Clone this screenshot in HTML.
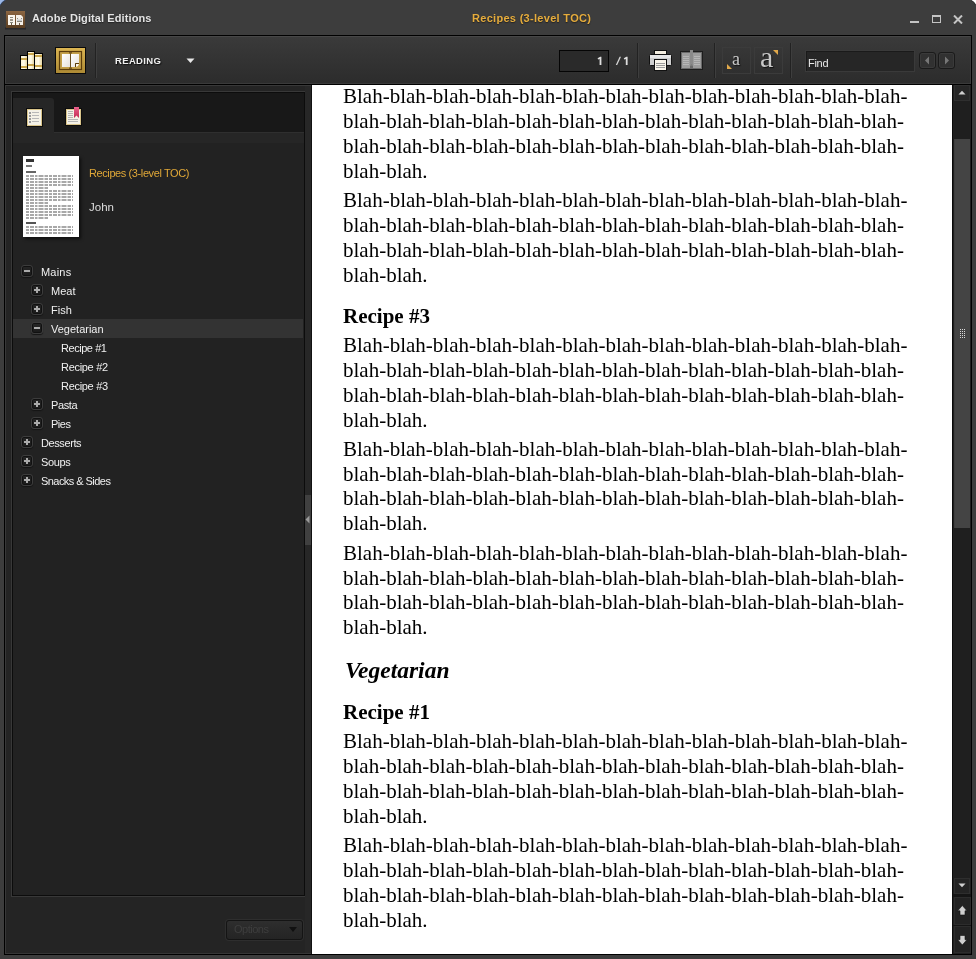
<!DOCTYPE html>
<html><head><meta charset="utf-8">
<style>
*{margin:0;padding:0;box-sizing:border-box}
html,body{width:976px;height:959px;overflow:hidden;background:#3c3c3c;font-family:"Liberation Sans",sans-serif}
.a{position:absolute}
#win{position:absolute;left:0;top:0;width:976px;height:959px;background:#3d3d3d;overflow:hidden;will-change:transform}
#cTL{left:-4px;top:-4px;width:10px;height:10px;background:#8ab0e8;transform:rotate(45deg)}
#cTR{right:-5px;top:-5px;width:10px;height:10px;background:#fff;transform:rotate(45deg)}
#appico{left:6px;top:11px;width:19px;height:17px;background:linear-gradient(#7a5634,#5a3c22);box-shadow:0 1px 1px #222}
.ttl{font-size:11px;font-weight:bold;white-space:nowrap;text-shadow:0 1px 1px #222}
#frame{left:4px;top:35px;width:968px;height:920px;background:#000}
#toolbar{left:5px;top:36px;width:966px;height:48px;background:linear-gradient(#3a3a3a,#2c2c2c);border-top:1px solid #474747;border-left:1px solid #3f3f3f;border-bottom:1px solid #3a3a3a;border-right:1px solid #3a3a3a}
#below{left:5px;top:85px;width:966px;height:869px;background:#242424;border-top:1px solid #383838;border-left:1px solid #383838;border-bottom:1px solid #363636}
#side{left:11px;top:91px;width:295px;height:806px;border:1px solid #383838;border-right-color:#2a2a2a}
#sidein{left:12px;top:92px;width:293px;height:804px;background:#222;border:1px solid #0c0c0c}
#tabbar{left:13px;top:93px;width:291px;height:39px;background:#181818}
#tab1{left:13px;top:98px;width:41px;height:35px;background:#262626;border-top-right-radius:3px}
#tabline{left:13px;top:132px;width:291px;height:11px;background:#262626;border-top:1px solid #2f2f2f}
#page{left:312px;top:85px;width:640px;height:869px;background:#fff;overflow:hidden;will-change:transform}
.p{position:absolute;left:31px;font-family:"Liberation Serif",serif;font-size:21.0px;line-height:24.9px;color:#000;white-space:nowrap;transform:scaleX(1.0000);transform-origin:0 0}
.h3{position:absolute;left:31px;font-family:"Liberation Serif",serif;font-size:21px;font-weight:bold;line-height:normal;color:#000;white-space:nowrap}
.h2{position:absolute;left:33px;font-family:"Liberation Serif",serif;font-size:23.5px;font-weight:bold;font-style:italic;line-height:normal;color:#000;white-space:nowrap}
#sb{left:953px;top:85px;width:18px;height:869px;background:#1f1f1f}
.sep{width:1px;height:35px;background:#222;box-shadow:1px 0 0 #3e3e3e}
.tt{font-size:11px;color:#f0f0f0;white-space:nowrap;line-height:14px}
.sel{left:13px;width:290px;height:19px;background:#333}
.tb{width:12px;height:12px;border-radius:3px;background:linear-gradient(#262626,#1a1a1a);border:1px solid #3c3c3c;box-shadow:inset 0 0 0 1px #111,0 1px 1px #151515}
.tb .h{position:absolute;left:2px;top:4px;width:6px;height:2px;background:#aaa}
.tb .v{position:absolute;left:4px;top:2px;width:2px;height:6px;background:#aaa}
</style></head><body>
<div id="win">
<svg class="a" style="left:0;top:0" width="8" height="8" viewBox="0 0 8 8"><path d="M0 0 H5.5 Q2 1.5 0 5.5 Z" fill="#9cb8e8"/><path d="M5.5 0 Q2 1.5 0 5.5" stroke="#23385a" stroke-width="0.8" fill="none"/></svg>
<svg class="a" style="left:968px;top:0" width="8" height="8" viewBox="0 0 8 8"><path d="M2.5 0 H8 V5.5 Q6.5 1.5 2.5 0 Z" fill="#fff"/><path d="M2.5 0 Q6.5 1.5 8 5.5" stroke="#1a1a1a" stroke-width="0.8" fill="none"/></svg>
<!-- title bar -->
<svg class="a" style="left:5px;top:10px" width="22" height="20" viewBox="0 0 22 20">
 <defs><linearGradient id="ai" x1="0" y1="0" x2="0" y2="1"><stop offset="0" stop-color="#8c6642"/><stop offset="1" stop-color="#5a3e22"/></linearGradient></defs>
 <rect x="0" y="17.5" width="21" height="2" fill="#1e1e22" opacity="0.7"/>
 <rect x="1" y="1" width="19" height="17" fill="url(#ai)"/>
 <rect x="3" y="5" width="7" height="10" fill="#fbf6ee"/>
 <path d="M11 5 H16 L18 7 V15 H11 Z" fill="#f4efe8"/>
 <rect x="5" y="7" width="3" height="1" fill="#8a8a80"/>
 <rect x="5" y="9" width="3" height="2" fill="#9a9488"/>
 <rect x="5" y="12" width="3" height="1" fill="#8a8a80"/>
 <rect x="6" y="13" width="1" height="2" fill="#6a5a48"/>
 <rect x="12" y="8" width="1" height="1" fill="#8a8a80"/><rect x="16" y="8" width="1" height="1" fill="#8a8a80"/>
 <rect x="12" y="9.5" width="5" height="1.5" fill="#c8ccd0"/>
 <rect x="12" y="11" width="5" height="1" fill="#8a8478"/>
 <rect x="14" y="13" width="1" height="2" fill="#6a5a48"/>
</svg>
<div class="a ttl" style="left:32px;top:12px;color:#e4e4e4;letter-spacing:0.1px">Adobe Digital Editions</div>
<div class="a ttl" style="left:472px;top:12px;color:#e6ac3c;letter-spacing:0.3px">Recipes (3-level TOC)</div>
<div class="a" style="left:910px;top:21px;width:9px;height:2px;background:#c4c4c4"></div>
<div class="a" style="left:932px;top:15px;width:9px;height:8px;border:1px solid #c4c4c4;border-top-width:2px"></div>
<svg class="a" style="left:953px;top:15px" width="10" height="9" viewBox="0 0 10 9"><path d="M1 0.5 L9 8.5 M9 0.5 L1 8.5" stroke="#c4c4c4" stroke-width="2"/></svg>

<div class="a" id="frame"></div>
<div class="a" id="toolbar"></div>
<div class="a" id="below"></div>

<!-- toolbar items -->
<svg class="a" style="left:19px;top:50px" width="25" height="21" viewBox="0 0 25 21">
 <defs>
  <linearGradient id="bk" x1="0" y1="0" x2="1" y2="0"><stop offset="0" stop-color="#f7efd2"/><stop offset="0.5" stop-color="#fffbe8"/><stop offset="1" stop-color="#e0cf98"/></linearGradient>
 </defs>
 <rect x="1.5" y="5.5" width="7" height="14" fill="url(#bk)" stroke="#000" stroke-width="1"/>
 <rect x="8.5" y="1.5" width="7" height="18" fill="url(#bk)" stroke="#000" stroke-width="1"/>
 <rect x="15.5" y="3.5" width="8" height="16" fill="url(#bk)" stroke="#000" stroke-width="1"/>
 <rect x="2" y="8" width="6" height="2" fill="#c9a54a"/><rect x="2" y="16" width="6" height="2" fill="#c9a54a"/>
 <rect x="9" y="3" width="6" height="2" fill="#c9a54a"/><rect x="9" y="14" width="6" height="2" fill="#c9a54a"/>
 <rect x="16" y="5" width="7" height="2" fill="#c9a54a"/><rect x="16" y="15" width="7" height="2" fill="#c9a54a"/>
</svg>
<svg class="a" style="left:55px;top:47px" width="31" height="27" viewBox="0 0 31 27">
 <defs>
  <linearGradient id="gb" x1="0" y1="0" x2="0" y2="1"><stop offset="0" stop-color="#dcb552"/><stop offset="1" stop-color="#ad8a34"/></linearGradient>
  <linearGradient id="pg" x1="0" y1="0" x2="1" y2="1"><stop offset="0" stop-color="#ffffff"/><stop offset="1" stop-color="#e6e2dc"/></linearGradient>
 </defs>
 <rect x="0.5" y="0.5" width="30" height="26" fill="url(#gb)" stroke="#0a0a0a"/>
 <rect x="4.5" y="4.5" width="22" height="18" fill="#c4a04a" stroke="#5a3c0c" stroke-width="1.2"/>
 <rect x="7" y="7" width="8" height="13" fill="url(#pg)"/>
 <rect x="16" y="7" width="8" height="13" fill="url(#pg)"/>
 <rect x="15" y="5" width="1" height="17" fill="#6a5020"/>
 <rect x="14" y="5" width="3" height="1.5" fill="#7a5a20"/><rect x="14" y="20.5" width="3" height="1.5" fill="#7a5a20"/>
 <rect x="20" y="16" width="4" height="4" fill="#c4a04a"/>
 <path d="M20.5 20 V16.5 H24" stroke="#5a3c0c" stroke-width="1" fill="none"/>
 <path d="M21 20 L21 17 L24 17 Q23.5 19.5 21 20 Z" fill="#fdf8ee"/>
</svg>
<div class="a sep" style="left:95px;top:43px"></div>
<div class="a" style="left:115px;top:55px;font-size:9.5px;font-weight:bold;color:#f0f0f0;letter-spacing:0.35px;text-shadow:1px 1px 1px #111;line-height:12px">READING</div>
<svg class="a" style="left:186px;top:58px" width="9" height="6" viewBox="0 0 9 6"><path d="M0.5 0.5 L8.5 0.5 L4.5 5 Z" fill="#e8e8e8"/></svg>

<div class="a" style="left:559px;top:50px;width:50px;height:22px;background:#2a2a2a;border:1px solid #050505"></div>
<svg class="a" style="left:590px;top:52px" width="42" height="18" viewBox="0 0 42 18">
 <path d="M7.6 6.2 L10.2 4.7 L11.4 4.7 L11.4 13.1 L9.6 13.1 L9.6 6.9 L8.1 7.6 Z" fill="#dedede"/>
 <path d="M29.6 4.7 L31 4.7 L27.2 13.1 L25.8 13.1 Z" fill="#d8d8d8"/>
 <path d="M33.8 6.2 L36.4 4.7 L37.6 4.7 L37.6 13.1 L35.8 13.1 L35.8 6.9 L34.3 7.6 Z" fill="#dedede"/>
</svg>

<div class="a sep" style="left:637px;top:43px"></div>

<svg class="a" style="left:649px;top:50px" width="23" height="21" viewBox="0 0 23 21">
 <rect x="5.5" y="0.5" width="12" height="6" fill="#f4eee0" stroke="#111"/>
 <rect x="0.5" y="4.5" width="22" height="11" rx="1" fill="#cfcfcf" stroke="#111"/>
 <rect x="1" y="5" width="21" height="3" fill="#e6e6e6"/>
 <rect x="5.5" y="9.5" width="12" height="11" fill="#f8f4ea" stroke="#111"/>
 <path d="M7 13.5 H16 M7 15.5 H16 M7 17.5 H16" stroke="#9a9a9a" stroke-width="1"/>
</svg>
<svg class="a" style="left:680px;top:50px" width="23" height="20" viewBox="0 0 23 20">
 <rect x="0.5" y="1.5" width="22" height="18" fill="#6a6a6a" stroke="#1c1c1c"/>
 <rect x="2" y="3" width="8" height="15" fill="#9c9c9c"/>
 <rect x="13" y="3" width="8" height="15" fill="#9c9c9c"/>
 <rect x="10" y="0" width="3" height="16" fill="#8a8a8a"/>
 <path d="M10 16 L11.5 14 L13 16 Z" fill="#7a7a7a"/>
 <path d="M3 6.5 H9 M3 8.5 H9 M3 10.5 H9 M3 12.5 H9 M3 14.5 H9 M14 6.5 H20 M14 8.5 H20 M14 10.5 H20 M14 12.5 H20 M14 14.5 H20" stroke="#bcbcbc" stroke-width="0.8"/>
</svg>
<div class="a sep" style="left:714px;top:43px"></div>

<div class="a" style="left:722px;top:47px;width:29px;height:27px;border:1px solid #3b3b3b;background:transparent"></div>
<div class="a" style="left:754px;top:47px;width:29px;height:27px;border:1px solid #3b3b3b;background:transparent"></div>
<div class="a" style="left:732px;top:49px;font-family:'Liberation Serif',serif;font-size:18px;color:#c8c8c8;line-height:20px;text-shadow:1px 1px 1px #111">a</div>
<div class="a" style="left:760px;top:42px;font-family:'Liberation Serif',serif;font-size:30px;color:#c8c8c8;line-height:30px;text-shadow:1px 1px 1px #111">a</div>
<svg class="a" style="left:727px;top:64px" width="6" height="6" viewBox="0 0 6 6"><path d="M0 0 L5 5 L0 5 Z" fill="#e0a84a"/></svg>
<svg class="a" style="left:773px;top:50px" width="6" height="6" viewBox="0 0 6 6"><path d="M0 0 L5 0 L5 5 Z" fill="#e0a84a"/></svg>
<div class="a sep" style="left:790px;top:43px"></div>

<div class="a" style="left:805px;top:50px;width:110px;height:22px;background:#262626;border:1px solid #3a3a3a;box-shadow:inset 1px 1px 0 #1a1a1a"></div>
<div class="a" style="left:808px;top:57px;font-size:11px;color:#e8e8e8;line-height:13px;letter-spacing:-0.3px">Find</div>
<div class="a" style="left:919px;top:52px;width:17px;height:17px;border-radius:3px;background:#313131;border:1px solid #1a1a1a;box-shadow:inset 0 0 0 1px #3a3a3a"></div>
<div class="a" style="left:938px;top:52px;width:17px;height:17px;border-radius:3px;background:#313131;border:1px solid #1a1a1a;box-shadow:inset 0 0 0 1px #3a3a3a"></div>
<svg class="a" style="left:924px;top:56px" width="6" height="9" viewBox="0 0 6 9"><path d="M5 0.5 L5 8.5 L1 4.5 Z" fill="#777"/></svg>
<svg class="a" style="left:944px;top:56px" width="6" height="9" viewBox="0 0 6 9"><path d="M1 0.5 L1 8.5 L5 4.5 Z" fill="#777"/></svg>

<div class="a" id="side"></div>
<div class="a" id="sidein"></div>
<div class="a" id="tabbar"></div>
<div class="a" id="tabline"></div>
<div class="a" id="tab1"></div>


<!-- tab icons -->
<svg class="a" style="left:26px;top:108px" width="17" height="19" viewBox="0 0 17 19">
 <rect x="0.5" y="0.5" width="16" height="18" fill="#f2ecd8" stroke="#0c0c0c"/>
 <rect x="1.5" y="1.5" width="14" height="16" fill="#f4f1e6" stroke="#d9c48a" stroke-width="1"/>
 <rect x="3" y="4" width="2" height="2" fill="#9a9a9a"/><rect x="3" y="7" width="2" height="2" fill="#9a9a9a"/>
 <rect x="3" y="10" width="2" height="2" fill="#9a9a9a"/><rect x="3" y="13" width="2" height="2" fill="#9a9a9a"/>
 <path d="M6 4.5 H13 M6 7.5 H13 M6 10.5 H13 M6 13.5 H13" stroke="#b8b8b8" stroke-width="1"/>
</svg>
<svg class="a" style="left:65px;top:107px" width="17" height="19" viewBox="0 0 17 19">
 <rect x="0.5" y="1.5" width="16" height="17" fill="#f2ecd8" stroke="#0c0c0c"/>
 <rect x="1.5" y="2.5" width="14" height="15" fill="#f4f1e6" stroke="#d9c48a" stroke-width="1"/>
 <path d="M3 4.5 H8 M3 6.5 H8 M3 8.5 H8 M3 10.5 H8 M3 12.5 H13 M3 14.5 H13" stroke="#b4b4b4" stroke-width="1"/>
 <defs><linearGradient id="rb" x1="0" y1="0" x2="0" y2="1"><stop offset="0" stop-color="#e8608a"/><stop offset="1" stop-color="#c42a55"/></linearGradient></defs><path d="M9 0 H14 V11 L11.5 8.5 L9 11 Z" fill="url(#rb)"/>
</svg>
<!-- thumbnail -->
<div class="a" style="left:23px;top:156px;width:56px;height:81px;background:#fff;box-shadow:2px 2px 3px rgba(0,0,0,0.6)">
 <svg class="a" style="left:0;top:0" width="56" height="81" viewBox="0 0 56 81">
  <rect x="3" y="3" width="8" height="3" fill="#333"/>
  <rect x="3" y="9" width="6" height="2" fill="#777"/>
  <rect x="3" y="15" width="10" height="2" fill="#666"/>
  <path d="M3 20 h47 M3 23 h47 M3 26 h47 M3 29 h47 M3 32 h22 M3 35 h47 M3 38 h47 M3 41 h47 M3 44 h47 M3 47 h22 M3 50 h47 M3 53 h47 M3 56 h47 M3 59 h47 M3 62 h22 M3 71 h47 M3 74 h47 M3 77 h47" stroke="#8c8c8c" stroke-width="1.6" stroke-dasharray="3 1 4 1 2.5 1 5 1 3.5 1" fill="none"/>
  <rect x="3" y="66" width="10" height="2" fill="#555"/>
 </svg>
</div>
<div class="a" style="left:89px;top:166px;font-size:11px;color:#e0a838;line-height:14px;letter-spacing:-0.4px;white-space:nowrap">Recipes (3-level TOC)</div>
<div class="a" style="left:89px;top:200px;font-size:11.5px;color:#dedede;line-height:14px">John</div>

<!-- options button -->
<div class="a" style="left:226px;top:920px;width:77px;height:20px;border-radius:3px;background:linear-gradient(#2e2e2e,#242424);border:1px solid #141414;box-shadow:0 0 0 1px #2e2e2e"></div>
<div class="a" style="left:234px;top:922px;font-size:11px;color:#3e3e3e;line-height:14px;letter-spacing:-0.5px">Options</div>
<svg class="a" style="left:289px;top:927px" width="8" height="5" viewBox="0 0 8 5"><path d="M0 0 H8 L4 5 Z" fill="#111"/></svg>

<!-- splitter -->
<div class="a" style="left:305px;top:86px;width:6px;height:867px;background:#272727"></div>
<div class="a" style="left:311px;top:85px;width:1px;height:869px;background:#111"></div>
<div class="a" style="left:305px;top:495px;width:6px;height:50px;background:#404040"></div>
<svg class="a" style="left:305px;top:515px" width="5" height="9" viewBox="0 0 5 9"><path d="M4.5 0.5 V8.5 L0.5 4.5 Z" fill="#9a9a9a"/></svg>

<!-- TOC -->
<div class="a tb" style="left:21px;top:265px"><i class="h"></i></div>
<div class="a tt" style="left:41px;top:265px;letter-spacing:0.2px">Mains</div>
<div class="a tb" style="left:31px;top:284px"><i class="h"></i><i class="v"></i></div>
<div class="a tt" style="left:51px;top:284px;letter-spacing:0px">Meat</div>
<div class="a tb" style="left:31px;top:303px"><i class="h"></i><i class="v"></i></div>
<div class="a tt" style="left:51px;top:303px;letter-spacing:0px">Fish</div>
<div class="a sel" style="top:319px"></div>
<div class="a tb" style="left:31px;top:322px"><i class="h"></i></div>
<div class="a tt" style="left:51px;top:322px;letter-spacing:0px">Vegetarian</div>
<div class="a tt" style="left:61px;top:341px;letter-spacing:-0.45px">Recipe #1</div>
<div class="a tt" style="left:61px;top:360px;letter-spacing:-0.3px">Recipe #2</div>
<div class="a tt" style="left:61px;top:379px;letter-spacing:-0.3px">Recipe #3</div>
<div class="a tb" style="left:31px;top:398px"><i class="h"></i><i class="v"></i></div>
<div class="a tt" style="left:51px;top:398px;letter-spacing:-0.4px">Pasta</div>
<div class="a tb" style="left:31px;top:417px"><i class="h"></i><i class="v"></i></div>
<div class="a tt" style="left:51px;top:417px;letter-spacing:-0.5px">Pies</div>
<div class="a tb" style="left:21px;top:436px"><i class="h"></i><i class="v"></i></div>
<div class="a tt" style="left:41px;top:436px;letter-spacing:-0.4px">Desserts</div>
<div class="a tb" style="left:21px;top:455px"><i class="h"></i><i class="v"></i></div>
<div class="a tt" style="left:41px;top:455px;letter-spacing:-0.35px">Soups</div>
<div class="a tb" style="left:21px;top:474px"><i class="h"></i><i class="v"></i></div>
<div class="a tt" style="left:41px;top:474px;letter-spacing:-0.55px">Snacks &amp; Sides</div>

<div class="a" id="page">
<div class="p" style="top:-0.74px">Blah-blah-blah-blah-blah-blah-blah-blah-blah-blah-blah-blah-blah-<br>blah-blah-blah-blah-blah-blah-blah-blah-blah-blah-blah-blah-blah-<br>blah-blah-blah-blah-blah-blah-blah-blah-blah-blah-blah-blah-blah-<br>blah-blah.</div>
<div class="p" style="top:102.86px">Blah-blah-blah-blah-blah-blah-blah-blah-blah-blah-blah-blah-blah-<br>blah-blah-blah-blah-blah-blah-blah-blah-blah-blah-blah-blah-blah-<br>blah-blah-blah-blah-blah-blah-blah-blah-blah-blah-blah-blah-blah-<br>blah-blah.</div>
<div class="p" style="top:247.96px">Blah-blah-blah-blah-blah-blah-blah-blah-blah-blah-blah-blah-blah-<br>blah-blah-blah-blah-blah-blah-blah-blah-blah-blah-blah-blah-blah-<br>blah-blah-blah-blah-blah-blah-blah-blah-blah-blah-blah-blah-blah-<br>blah-blah.</div>
<div class="p" style="top:351.66px">Blah-blah-blah-blah-blah-blah-blah-blah-blah-blah-blah-blah-blah-<br>blah-blah-blah-blah-blah-blah-blah-blah-blah-blah-blah-blah-blah-<br>blah-blah-blah-blah-blah-blah-blah-blah-blah-blah-blah-blah-blah-<br>blah-blah.</div>
<div class="p" style="top:455.66px">Blah-blah-blah-blah-blah-blah-blah-blah-blah-blah-blah-blah-blah-<br>blah-blah-blah-blah-blah-blah-blah-blah-blah-blah-blah-blah-blah-<br>blah-blah-blah-blah-blah-blah-blah-blah-blah-blah-blah-blah-blah-<br>blah-blah.</div>
<div class="p" style="top:643.96px">Blah-blah-blah-blah-blah-blah-blah-blah-blah-blah-blah-blah-blah-<br>blah-blah-blah-blah-blah-blah-blah-blah-blah-blah-blah-blah-blah-<br>blah-blah-blah-blah-blah-blah-blah-blah-blah-blah-blah-blah-blah-<br>blah-blah.</div>
<div class="p" style="top:747.86px">Blah-blah-blah-blah-blah-blah-blah-blah-blah-blah-blah-blah-blah-<br>blah-blah-blah-blah-blah-blah-blah-blah-blah-blah-blah-blah-blah-<br>blah-blah-blah-blah-blah-blah-blah-blah-blah-blah-blah-blah-blah-<br>blah-blah.</div>
<div class="h3" style="top:219.09px">Recipe #3</div>
<div class="h2" style="top:571.56px">Vegetarian</div>
<div class="h3" style="top:615.09px">Recipe #1</div>
</div>

<div class="a" style="left:952px;top:85px;width:1px;height:869px;background:#0a0a0a"></div>
<div class="a" style="left:953px;top:85px;width:18px;height:869px;background:#1f1f1f"></div>
<div class="a" style="left:954px;top:85px;width:16px;height:16px;background:#262626;border:1px solid #2f2f2f"></div>
<svg class="a" style="left:958px;top:90px" width="8" height="5" viewBox="0 0 8 5"><path d="M0.5 4.5 L7.5 4.5 L4 0.8 Z" fill="#d0d0d0"/></svg>
<div class="a" style="left:954px;top:139px;width:16px;height:389px;background:#444;border-left:1px solid #3e3e3e"></div>
<svg class="a" style="left:960px;top:329px" width="5" height="9" viewBox="0 0 5 9" shape-rendering="crispEdges">
 <g fill="#d8d8d8"><rect x="0" y="0" width="1" height="1"/><rect x="2" y="0" width="1" height="1"/><rect x="4" y="0" width="1" height="1"/>
 <rect x="0" y="2" width="1" height="1"/><rect x="2" y="2" width="1" height="1"/><rect x="4" y="2" width="1" height="1"/>
 <rect x="0" y="4" width="1" height="1"/><rect x="2" y="4" width="1" height="1"/><rect x="4" y="4" width="1" height="1"/>
 <rect x="0" y="6" width="1" height="1"/><rect x="2" y="6" width="1" height="1"/><rect x="4" y="6" width="1" height="1"/>
 <rect x="0" y="8" width="1" height="1"/><rect x="2" y="8" width="1" height="1"/><rect x="4" y="8" width="1" height="1"/></g>
</svg>
<div class="a" style="left:954px;top:878px;width:16px;height:16px;background:#232323;border:1px solid #2e2e2e"></div>
<svg class="a" style="left:958px;top:883px" width="8" height="5" viewBox="0 0 8 5"><path d="M0.5 0.5 L7.5 0.5 L4 4.2 Z" fill="#d0d0d0"/></svg>
<div class="a" style="left:953px;top:894px;width:18px;height:3px;background:#151515"></div>
<div class="a" style="left:954px;top:897px;width:17px;height:28px;background:#222;border:1px solid #2c2c2c"></div>
<svg class="a" style="left:957px;top:905px" width="11" height="11" viewBox="0 0 11 11"><path d="M5.3 0.5 L10 5.8 L8 5.8 L8 10 L3 10 L3 5.8 L0.7 5.8 Z" fill="#cfcfcf" stroke="#111" stroke-width="0.6"/></svg>
<div class="a" style="left:953px;top:925px;width:18px;height:1px;background:#151515"></div>
<div class="a" style="left:954px;top:926px;width:17px;height:27px;background:#222;border:1px solid #2c2c2c"></div>
<svg class="a" style="left:957px;top:935px" width="11" height="11" viewBox="0 0 11 11"><path d="M3 0.5 L8 0.5 L8 4.7 L10 4.7 L5.3 10 L0.7 4.7 L3 4.7 Z" fill="#cfcfcf" stroke="#111" stroke-width="0.6"/></svg>

</div>
</body></html>
